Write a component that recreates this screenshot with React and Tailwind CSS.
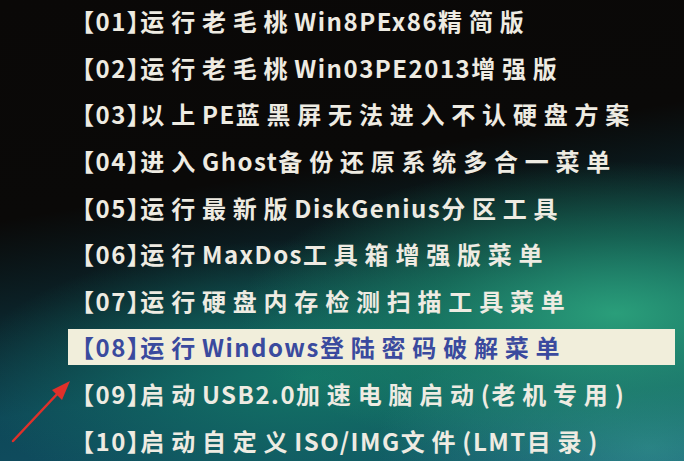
import React from "react";

const items = [
  "【01】运行老毛桃Win8PEx86精简版",
  "【02】运行老毛桃Win03PE2013增强版",
  "【03】以上PE蓝黑屏无法进入不认硬盘方案",
  "【04】进入Ghost备份还原系统多合一菜单",
  "【05】运行最新版DiskGenius分区工具",
  "【06】运行MaxDos工具箱增强版菜单",
  "【07】运行硬盘内存检测扫描工具菜单",
  "【08】运行Windows登陆密码破解菜单",
  "【09】启动USB2.0加速电脑启动(老机专用)",
  "【10】启动自定义ISO/IMG文件(LMT目录)",
];

function runs(text) {
  const out = [];
  const re = /([\u4e00-\u9fff]+)|([^\u4e00-\u9fff]+)/g;
  let m;
  while ((m = re.exec(text))) {
    out.push({ cjk: !!m[1], s: m[0] });
  }
  return out;
}

export default function App() {
  return (
    <div className="relative w-[684px] h-[461px] overflow-hidden bg-[radial-gradient(ellipse_55%_33%_at_90%_68%,#2a9e7a_0%,rgba(30,140,105,0.55)_50%,transparent_100%),radial-gradient(ellipse_40%_30%_at_95%_97%,rgba(55,150,150,0.7)_0%,transparent_100%),radial-gradient(ellipse_50%_30%_at_45%_82%,#137466_0%,transparent_100%),linear-gradient(170deg,#0a0807_0%,#0a0908_38%,#0b2228_54%,#0e4858_72%,#12546a_100%)] font-['Noto_Sans_CJK_SC','Noto_Sans',sans-serif]">
      <div className="flex flex-col pl-[68px] pr-[9px] -mt-[2px]">
        {items.map((t, i) => {
          const sel = i === 7;
          return (
            <div key={i} className="h-[46.6px] flex items-center">
              <div
                className={
                  sel
                    ? "w-full h-[36px] flex items-center bg-[#f1eedb] text-[#3a4a9e] pl-[14px]"
                    : "w-full flex items-center text-[#eeebe2] pl-[14px]"
                }
              >
                <span className="text-[24px] leading-none font-semibold [font-feature-settings:'halt'] whitespace-nowrap">
                  {runs(t).map((r, j) => (
                    <span
                      key={j}
                      className={r.cjk ? "tracking-[6.8px]" : "tracking-[1.5px]"}
                    >
                      {r.s}
                    </span>
                  ))}
                </span>
              </div>
            </div>
          );
        })}
      </div>
      <svg
        className="absolute left-0 top-0"
        width="684"
        height="461"
        viewBox="0 0 684 461"
      >
        <line x1="13" y1="441" x2="60" y2="391" stroke="#e0302a" strokeWidth="2.5" strokeLinecap="round" />
        <polygon points="70,381 52,390 62,400" fill="#e0302a" />
      </svg>
    </div>
  );
}
